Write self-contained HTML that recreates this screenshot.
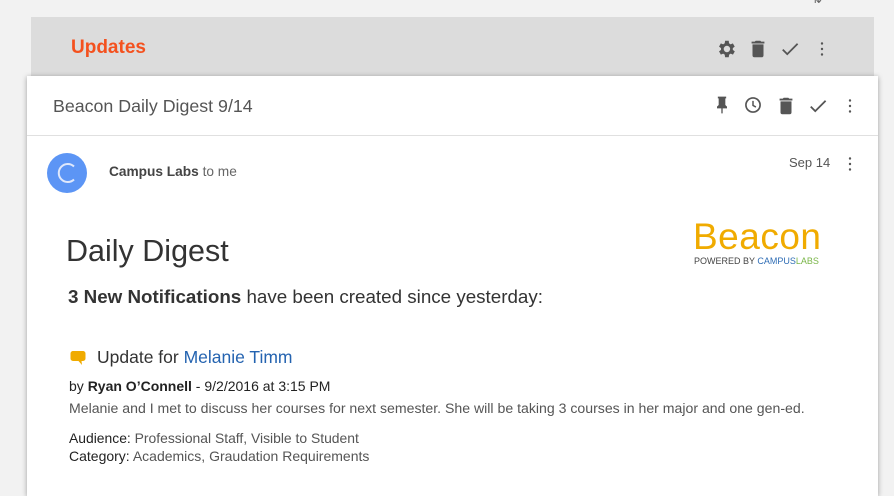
<!DOCTYPE html>
<html><head><meta charset="utf-8"><style>
*{margin:0;padding:0;box-sizing:border-box}
body{width:894px;height:476px;overflow:hidden;background:#f2f2f2;font-family:"Liberation Sans",sans-serif;position:relative;color:#333}
.bar{position:absolute;left:31px;top:17px;width:843px;height:62px;background:#dcdcdc}
.bar .t{position:absolute;left:40px;top:20px;font-size:19px;font-weight:bold;color:#f4511e}
.card{position:absolute;left:27px;top:76px;width:851px;height:420px;background:#fff;box-shadow:0 1px 5px rgba(0,0,0,.35)}
.hdr{height:60px;border-bottom:1px solid #e0e0e0;position:relative}
.hdr .t{position:absolute;left:26px;top:20px;font-size:17.8px;color:#555}
.ic{position:absolute}
.av{position:absolute;left:20px;top:77px;width:40px;height:40px;border-radius:50%;background:#5c95f5}
.abs{position:absolute;white-space:nowrap}
</style></head><body>
<div class="abs" style="left:812px;top:-8px;font-size:12px;color:#666">⇅</div>
<div class="bar"><div class="t">Updates</div>
<svg class="ic" style="left:684px;top:21px" width="22" height="22" viewBox="0 0 24 24"><path fill="#555" d="M19.4 13a7.5 7.5 0 000-2l2.1-1.6-2-3.5-2.5 1a7 7 0 00-1.7-1L15 3h-4l-.4 2.9a7 7 0 00-1.7 1l-2.5-1-2 3.5L6.6 11a7.5 7.5 0 000 2l-2.2 1.6 2 3.5 2.5-1a7 7 0 001.7 1L11 21h4l.4-2.9a7 7 0 001.7-1l2.5 1 2-3.5zM13 15.5a3.5 3.5 0 110-7 3.5 3.5 0 010 7z"/></svg>
<svg class="ic" style="left:716px;top:21px" width="22" height="22" viewBox="0 0 24 24"><path fill="#555" d="M6 19a2 2 0 002 2h8a2 2 0 002-2V7H6zM19 4h-3.5l-1-1h-5l-1 1H5v2h14z"/></svg>
<svg class="ic" style="left:748px;top:21px" width="22" height="22" viewBox="0 0 24 24"><path fill="#555" d="M9 16.2L4.8 12l-1.4 1.4L9 19 21 7l-1.4-1.4z"/></svg>
<svg class="ic" style="left:780px;top:21px" width="22" height="22" viewBox="0 0 24 24"><circle cx="12" cy="6" r="1.3" fill="#555"/><circle cx="12" cy="12" r="1.3" fill="#555"/><circle cx="12" cy="18" r="1.3" fill="#555"/></svg>
</div>
<div class="card">
<div class="hdr"><div class="t">Beacon Daily Digest 9/14</div>
<svg class="ic" style="left:685px;top:19px" width="20" height="20" viewBox="0 0 24 24"><path fill="#555" d="M16 12V4h1V2H7v2h1v8l-2 2v2h5.2v6h1.6v-6H18v-2z"/></svg>
<svg class="ic" style="left:716px;top:19px" width="20" height="20" viewBox="0 0 24 24"><circle cx="12" cy="12" r="8.5" fill="none" stroke="#555" stroke-width="2"/><path d="M12 7v5.5l3.5 2" fill="none" stroke="#555" stroke-width="1.8"/></svg>
<svg class="ic" style="left:748px;top:19px" width="22" height="22" viewBox="0 0 24 24"><path fill="#555" d="M6 19a2 2 0 002 2h8a2 2 0 002-2V7H6zM19 4h-3.5l-1-1h-5l-1 1H5v2h14z"/></svg>
<svg class="ic" style="left:780px;top:19px" width="22" height="22" viewBox="0 0 24 24"><path fill="#555" d="M9 16.2L4.8 12l-1.4 1.4L9 19 21 7l-1.4-1.4z"/></svg>
<svg class="ic" style="left:812px;top:19px" width="22" height="22" viewBox="0 0 24 24"><circle cx="12" cy="6" r="1.3" fill="#555"/><circle cx="12" cy="12" r="1.3" fill="#555"/><circle cx="12" cy="18" r="1.3" fill="#555"/></svg>
</div>
<div class="av"><svg width="40" height="40" viewBox="0 0 40 40"><path d="M27 13.5a9 9 0 100 13" fill="none" stroke="#dfe8fb" stroke-width="2"/></svg></div>
<div class="abs" style="left:82px;top:88px;font-size:13.7px;color:#444"><b style="font-weight:600;color:#444">Campus Labs</b> <span style="color:#666">to me</span></div>
<div class="abs" style="left:762px;top:79px;font-size:13px;color:#555">Sep 14</div>
<svg class="ic" style="left:812px;top:77px" width="22" height="22" viewBox="0 0 24 24"><circle cx="12" cy="6" r="1.3" fill="#555"/><circle cx="12" cy="12" r="1.3" fill="#555"/><circle cx="12" cy="18" r="1.3" fill="#555"/></svg>
<div class="abs" style="left:666px;top:140px;font-size:37px;color:#f0ab00;letter-spacing:.5px">Beacon</div>
<div class="abs" style="left:667px;top:180px;font-size:9px;color:#444">POWERED BY <span style="color:#2f6db5">CAMPUS</span><span style="color:#7ab648">LABS</span></div>
<div class="abs" style="left:39px;top:158px;font-size:30.5px;color:#333">Daily Digest</div>
<div class="abs" style="left:41px;top:210px;font-size:18.8px;color:#333"><b>3 New Notifications</b> have been created since yesterday:</div>
<svg class="ic" style="left:42px;top:273px" width="18" height="18" viewBox="0 0 18 18"><path fill="#f0ab00" d="M4 2h10a2.5 2.5 0 012.5 2.5v5a2.5 2.5 0 01-2.5 2.5h-1.5l.5 4-3.5-4H4a2.5 2.5 0 01-2.5-2.5v-5A2.5 2.5 0 014 2z"/></svg>
<div class="abs" style="left:70px;top:271px;font-size:17.5px;color:#333">Update for <span style="color:#2463b0">Melanie Timm</span></div>
<div class="abs" style="left:42px;top:302px;font-size:14px;color:#222">by <b style="font-weight:600">Ryan O’Connell</b> - 9/2/2016 at 3:15 PM</div>
<div class="abs" style="left:42px;top:324px;font-size:14.1px;color:#555">Melanie and I met to discuss her courses for next semester. She will be taking 3 courses in her major and one gen-ed.</div>
<div class="abs" style="left:42px;top:354px;font-size:13.9px;color:#555"><span style="color:#222">Audience:</span> Professional Staff, Visible to Student</div>
<div class="abs" style="left:42px;top:372px;font-size:14px;color:#555"><span style="color:#222">Category:</span> Academics, Graudation Requirements</div>
</div>
</body></html>
